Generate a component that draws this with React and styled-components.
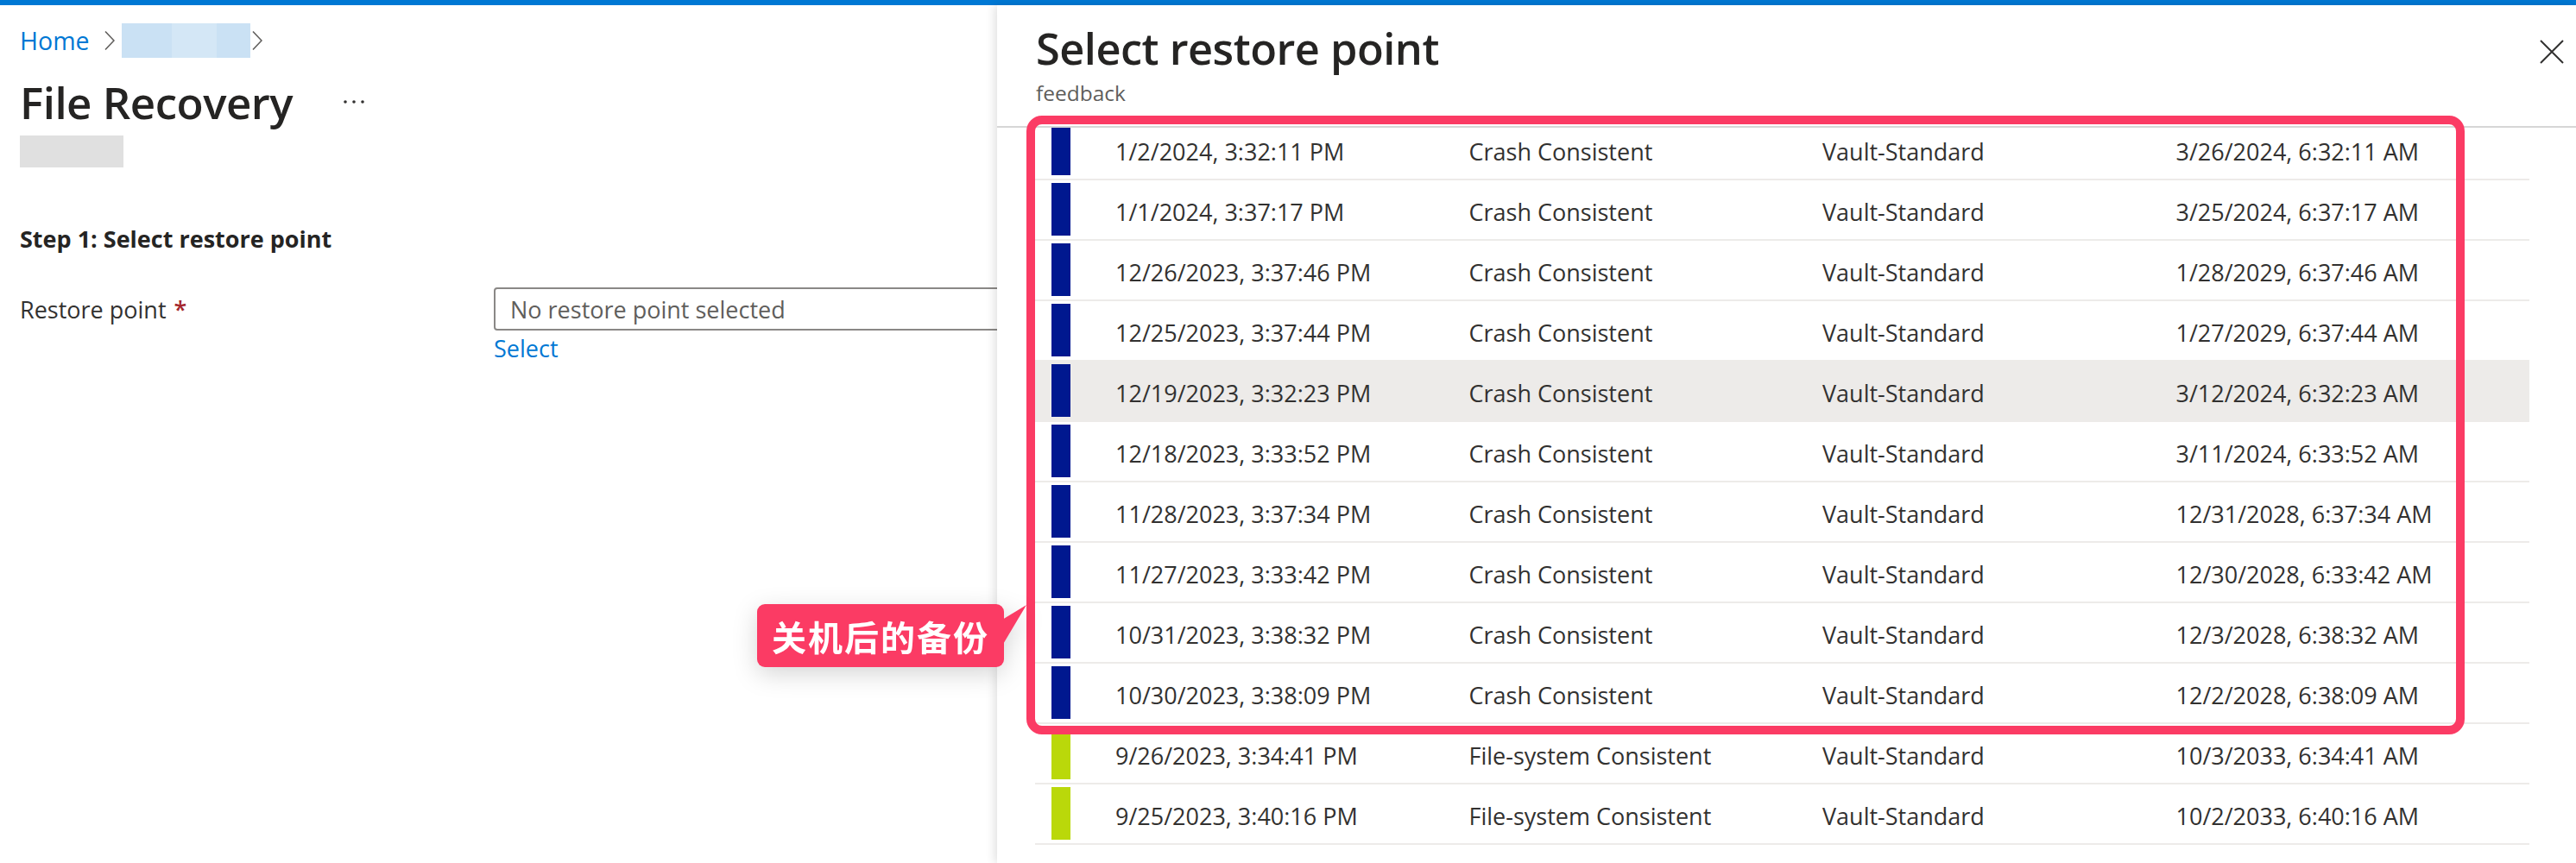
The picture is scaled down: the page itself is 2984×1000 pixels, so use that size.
import React from "react";
import styled, { createGlobalStyle } from "styled-components";

const GlobalStyle = createGlobalStyle`
  html, body { margin: 0; padding: 0; background: #ffffff; }
  body { font-family: "Open Sans", "Noto Sans", sans-serif; color: #323130; }
  * { box-sizing: border-box; }
`;

const Screen = styled.div`
  position: relative;
  width: 2984px;
  height: 1000px;
  overflow: hidden;
  background: #ffffff;
`;

const TopBar = styled.div`
  height: 6px;
  background: #0078d4;
`;

const Main = styled.main`
  padding: 21px 0 0 23px;
  display: flex;
  flex-direction: column;
`;

const Breadcrumb = styled.nav`
  display: flex;
  align-items: center;
  height: 40px;
`;

const Crumb = styled.a`
  color: #0078d4;
  font-size: 28.5px;
  line-height: 40px;
  text-decoration: none;
`;

const ChevronWrap = styled.span`
  display: inline-flex;
  margin: ${(p) => p.$m || "0"};
`;

const Redacted = styled.div`
  display: flex;
  height: 40px;
`;

const RedactedPiece = styled.div`
  width: ${(p) => p.$w}px;
  height: 100%;
  background: ${(p) => p.$c};
`;

const TitleRow = styled.div`
  display: flex;
  align-items: center;
  margin-top: 21px;
  height: 60px;
`;

const PageTitle = styled.h1`
  margin: 0;
  font-size: 51px;
  line-height: 60px;
  font-weight: 600;
  color: #252423;
  letter-spacing: -0.5px;
`;

const MoreButton = styled.span`
  display: inline-flex;
  margin-left: 58px;
`;

const Subtitle = styled.div`
  margin-top: 9px;
  width: 120px;
  height: 37px;
  background: #e0e0e0;
`;

const SectionTitle = styled.h2`
  margin: 65px 0 0;
  font-size: 27px;
  line-height: 36px;
  font-weight: 700;
  color: #252423;
`;

const FormRow = styled.div`
  display: grid;
  grid-template-columns: 549px 900px;
  margin-top: 38px;
`;

const Label = styled.label`
  margin-top: 8px;
  font-size: 27px;
  line-height: 36px;
  color: #323130;
`;

const Required = styled.span`
  color: #a4262c;
  margin-left: 9px;
  font-weight: 600;
`;

const FieldCol = styled.div`
  display: flex;
  flex-direction: column;
  align-items: flex-start;
`;

const FakeInput = styled.div`
  width: 900px;
  height: 50px;
  border: 2px solid #8a8886;
  border-radius: 4px;
  padding-left: 17px;
  display: flex;
  align-items: center;
  font-size: 27px;
  color: #605e5c;
`;

const LinkButton = styled.a`
  margin-top: 3px;
  font-size: 27px;
  line-height: 36px;
  color: #0078d4;
  text-decoration: none;
`;

/* Panel (blade overlay) */
const Panel = styled.aside`
  position: absolute;
  top: 6px;
  left: 1155px;
  right: 0;
  bottom: 0;
  background: #ffffff;
  box-shadow: -3px 0 10px rgba(0, 0, 0, 0.12);
  display: flex;
  flex-direction: column;
`;

const PanelHeader = styled.header`
  display: flex;
  justify-content: space-between;
  align-items: flex-start;
  padding: 20px 14px 22px 45px;
  border-bottom: 2px solid #d6d6d6;
`;

const PanelTitle = styled.h2`
  margin: 0;
  font-size: 50.5px;
  line-height: 60px;
  font-weight: 600;
  color: #252423;
  letter-spacing: -0.5px;
`;

const PanelSub = styled.div`
  margin-top: 6px;
  font-size: 24.5px;
  line-height: 32px;
  color: #605e5c;
`;

const CloseButton = styled.button`
  margin-top: 20px;
  padding: 0;
  border: 0;
  background: transparent;
  display: inline-flex;
`;

const ListViewport = styled.div`
  flex: 1;
  margin: 0 54px 0 44px;
  overflow: hidden;
`;

const List = styled.div`
  margin-top: -9px;
  display: flex;
  flex-direction: column;
`;

const Row = styled.div`
  display: grid;
  grid-template-columns: 93px 1fr 1fr 1fr 1fr;
  height: 70px;
  border-bottom: 2px solid #edebe9;
  background: ${(p) => (p.$selected ? "#edebe9" : "transparent")};
  align-items: center;
`;

const StatusBar = styled.div`
  align-self: stretch;
  margin: 3px 0 4px 19px;
  width: 22px;
  background: ${(p) => p.$color};
`;

const Cell = styled.div`
  padding-top: 5px;
  font-size: 27px;
  color: #323130;
  white-space: nowrap;
`;

/* Annotation overlays */
const HighlightFrame = styled.div`
  position: absolute;
  left: 1189px;
  top: 134px;
  width: 1666px;
  height: 717px;
  border: 10px solid #fb3b64;
  border-radius: 18px;
  pointer-events: none;
`;

const Callout = styled.div`
  position: absolute;
  left: 877px;
  top: 700px;
  width: 286px;
  height: 73px;
  filter: drop-shadow(0 8px 14px rgba(0, 0, 0, 0.16));
`;

const CalloutBox = styled.div`
  width: 100%;
  height: 100%;
  border-radius: 9px;
  background: #fb3b64;
  color: #ffffff;
  display: flex;
  align-items: center;
  justify-content: center;
  font-family: "Noto Sans CJK SC", "Noto Sans", sans-serif;
  font-weight: 700;
  font-size: 40px;
  letter-spacing: 2px;
`;

const CalloutTail = styled.svg`
  position: absolute;
  left: 284px;
  top: 0;
`;

const Chevron = () => (
  <svg width="12" height="24" viewBox="0 0 12 24">
    <path d="M1 1.5 L11 12 L1 22.5" fill="none" stroke="#605e5c" strokeWidth="1.6" />
  </svg>
);

const Dots = () => (
  <svg width="26" height="6" viewBox="0 0 26 6">
    <circle cx="3" cy="3" r="1.8" fill="#323130" />
    <circle cx="13" cy="3" r="1.8" fill="#323130" />
    <circle cx="23" cy="3" r="1.8" fill="#323130" />
  </svg>
);

const CloseIcon = () => (
  <svg width="28" height="28" viewBox="0 0 28 28">
    <path d="M1 1 L27 27 M27 1 L1 27" stroke="#323130" strokeWidth="2" fill="none" />
  </svg>
);

const NAVY = "#00188f";
const LIME = "#bad80a";

const rows = [
  ["1/2/2024, 3:32:11 PM", "Crash Consistent", "Vault-Standard", "3/26/2024, 6:32:11 AM", NAVY],
  ["1/1/2024, 3:37:17 PM", "Crash Consistent", "Vault-Standard", "3/25/2024, 6:37:17 AM", NAVY],
  ["12/26/2023, 3:37:46 PM", "Crash Consistent", "Vault-Standard", "1/28/2029, 6:37:46 AM", NAVY],
  ["12/25/2023, 3:37:44 PM", "Crash Consistent", "Vault-Standard", "1/27/2029, 6:37:44 AM", NAVY],
  ["12/19/2023, 3:32:23 PM", "Crash Consistent", "Vault-Standard", "3/12/2024, 6:32:23 AM", NAVY, true],
  ["12/18/2023, 3:33:52 PM", "Crash Consistent", "Vault-Standard", "3/11/2024, 6:33:52 AM", NAVY],
  ["11/28/2023, 3:37:34 PM", "Crash Consistent", "Vault-Standard", "12/31/2028, 6:37:34 AM", NAVY],
  ["11/27/2023, 3:33:42 PM", "Crash Consistent", "Vault-Standard", "12/30/2028, 6:33:42 AM", NAVY],
  ["10/31/2023, 3:38:32 PM", "Crash Consistent", "Vault-Standard", "12/3/2028, 6:38:32 AM", NAVY],
  ["10/30/2023, 3:38:09 PM", "Crash Consistent", "Vault-Standard", "12/2/2028, 6:38:09 AM", NAVY],
  ["9/26/2023, 3:34:41 PM", "File-system Consistent", "Vault-Standard", "10/3/2033, 6:34:41 AM", LIME],
  ["9/25/2023, 3:40:16 PM", "File-system Consistent", "Vault-Standard", "10/2/2033, 6:40:16 AM", LIME],
];

export default function App() {
  return (
    <>
      <GlobalStyle />
      <Screen>
        <TopBar />
        <Main>
          <Breadcrumb>
            <Crumb href="#">Home</Crumb>
            <ChevronWrap $m="0 8px 0 17px"><Chevron /></ChevronWrap>
            <Redacted>
              <RedactedPiece $w={58} $c="#cae1f4" />
              <RedactedPiece $w={52} $c="#d4e7f6" />
              <RedactedPiece $w={39} $c="#cae1f4" />
            </Redacted>
            <ChevronWrap $m="0 0 0 2px"><Chevron /></ChevronWrap>
          </Breadcrumb>
          <TitleRow>
            <PageTitle>File Recovery</PageTitle>
            <MoreButton><Dots /></MoreButton>
          </TitleRow>
          <Subtitle />
          <SectionTitle>Step 1: Select restore point</SectionTitle>
          <FormRow>
            <Label>
              Restore point<Required>*</Required>
            </Label>
            <FieldCol>
              <FakeInput>No restore point selected</FakeInput>
              <LinkButton href="#">Select</LinkButton>
            </FieldCol>
          </FormRow>
        </Main>

        <Panel>
          <PanelHeader>
            <div>
              <PanelTitle>Select restore point</PanelTitle>
              <PanelSub>feedback</PanelSub>
            </div>
            <CloseButton aria-label="Close"><CloseIcon /></CloseButton>
          </PanelHeader>
          <ListViewport>
            <List>
              {rows.map((r) => (
                <Row key={r[0]} $selected={r[5]}>
                  <StatusBar $color={r[4]} />
                  <Cell>{r[0]}</Cell>
                  <Cell>{r[1]}</Cell>
                  <Cell>{r[2]}</Cell>
                  <Cell>{r[3]}</Cell>
                </Row>
              ))}
            </List>
          </ListViewport>
        </Panel>

        <HighlightFrame />
        <Callout>
          <CalloutBox>关机后的备份</CalloutBox>
          <CalloutTail width="30" height="52" viewBox="0 0 30 52">
            <polygon points="0,18 28,1 0,48" fill="#fb3b64" />
          </CalloutTail>
        </Callout>
      </Screen>
    </>
  );
}
